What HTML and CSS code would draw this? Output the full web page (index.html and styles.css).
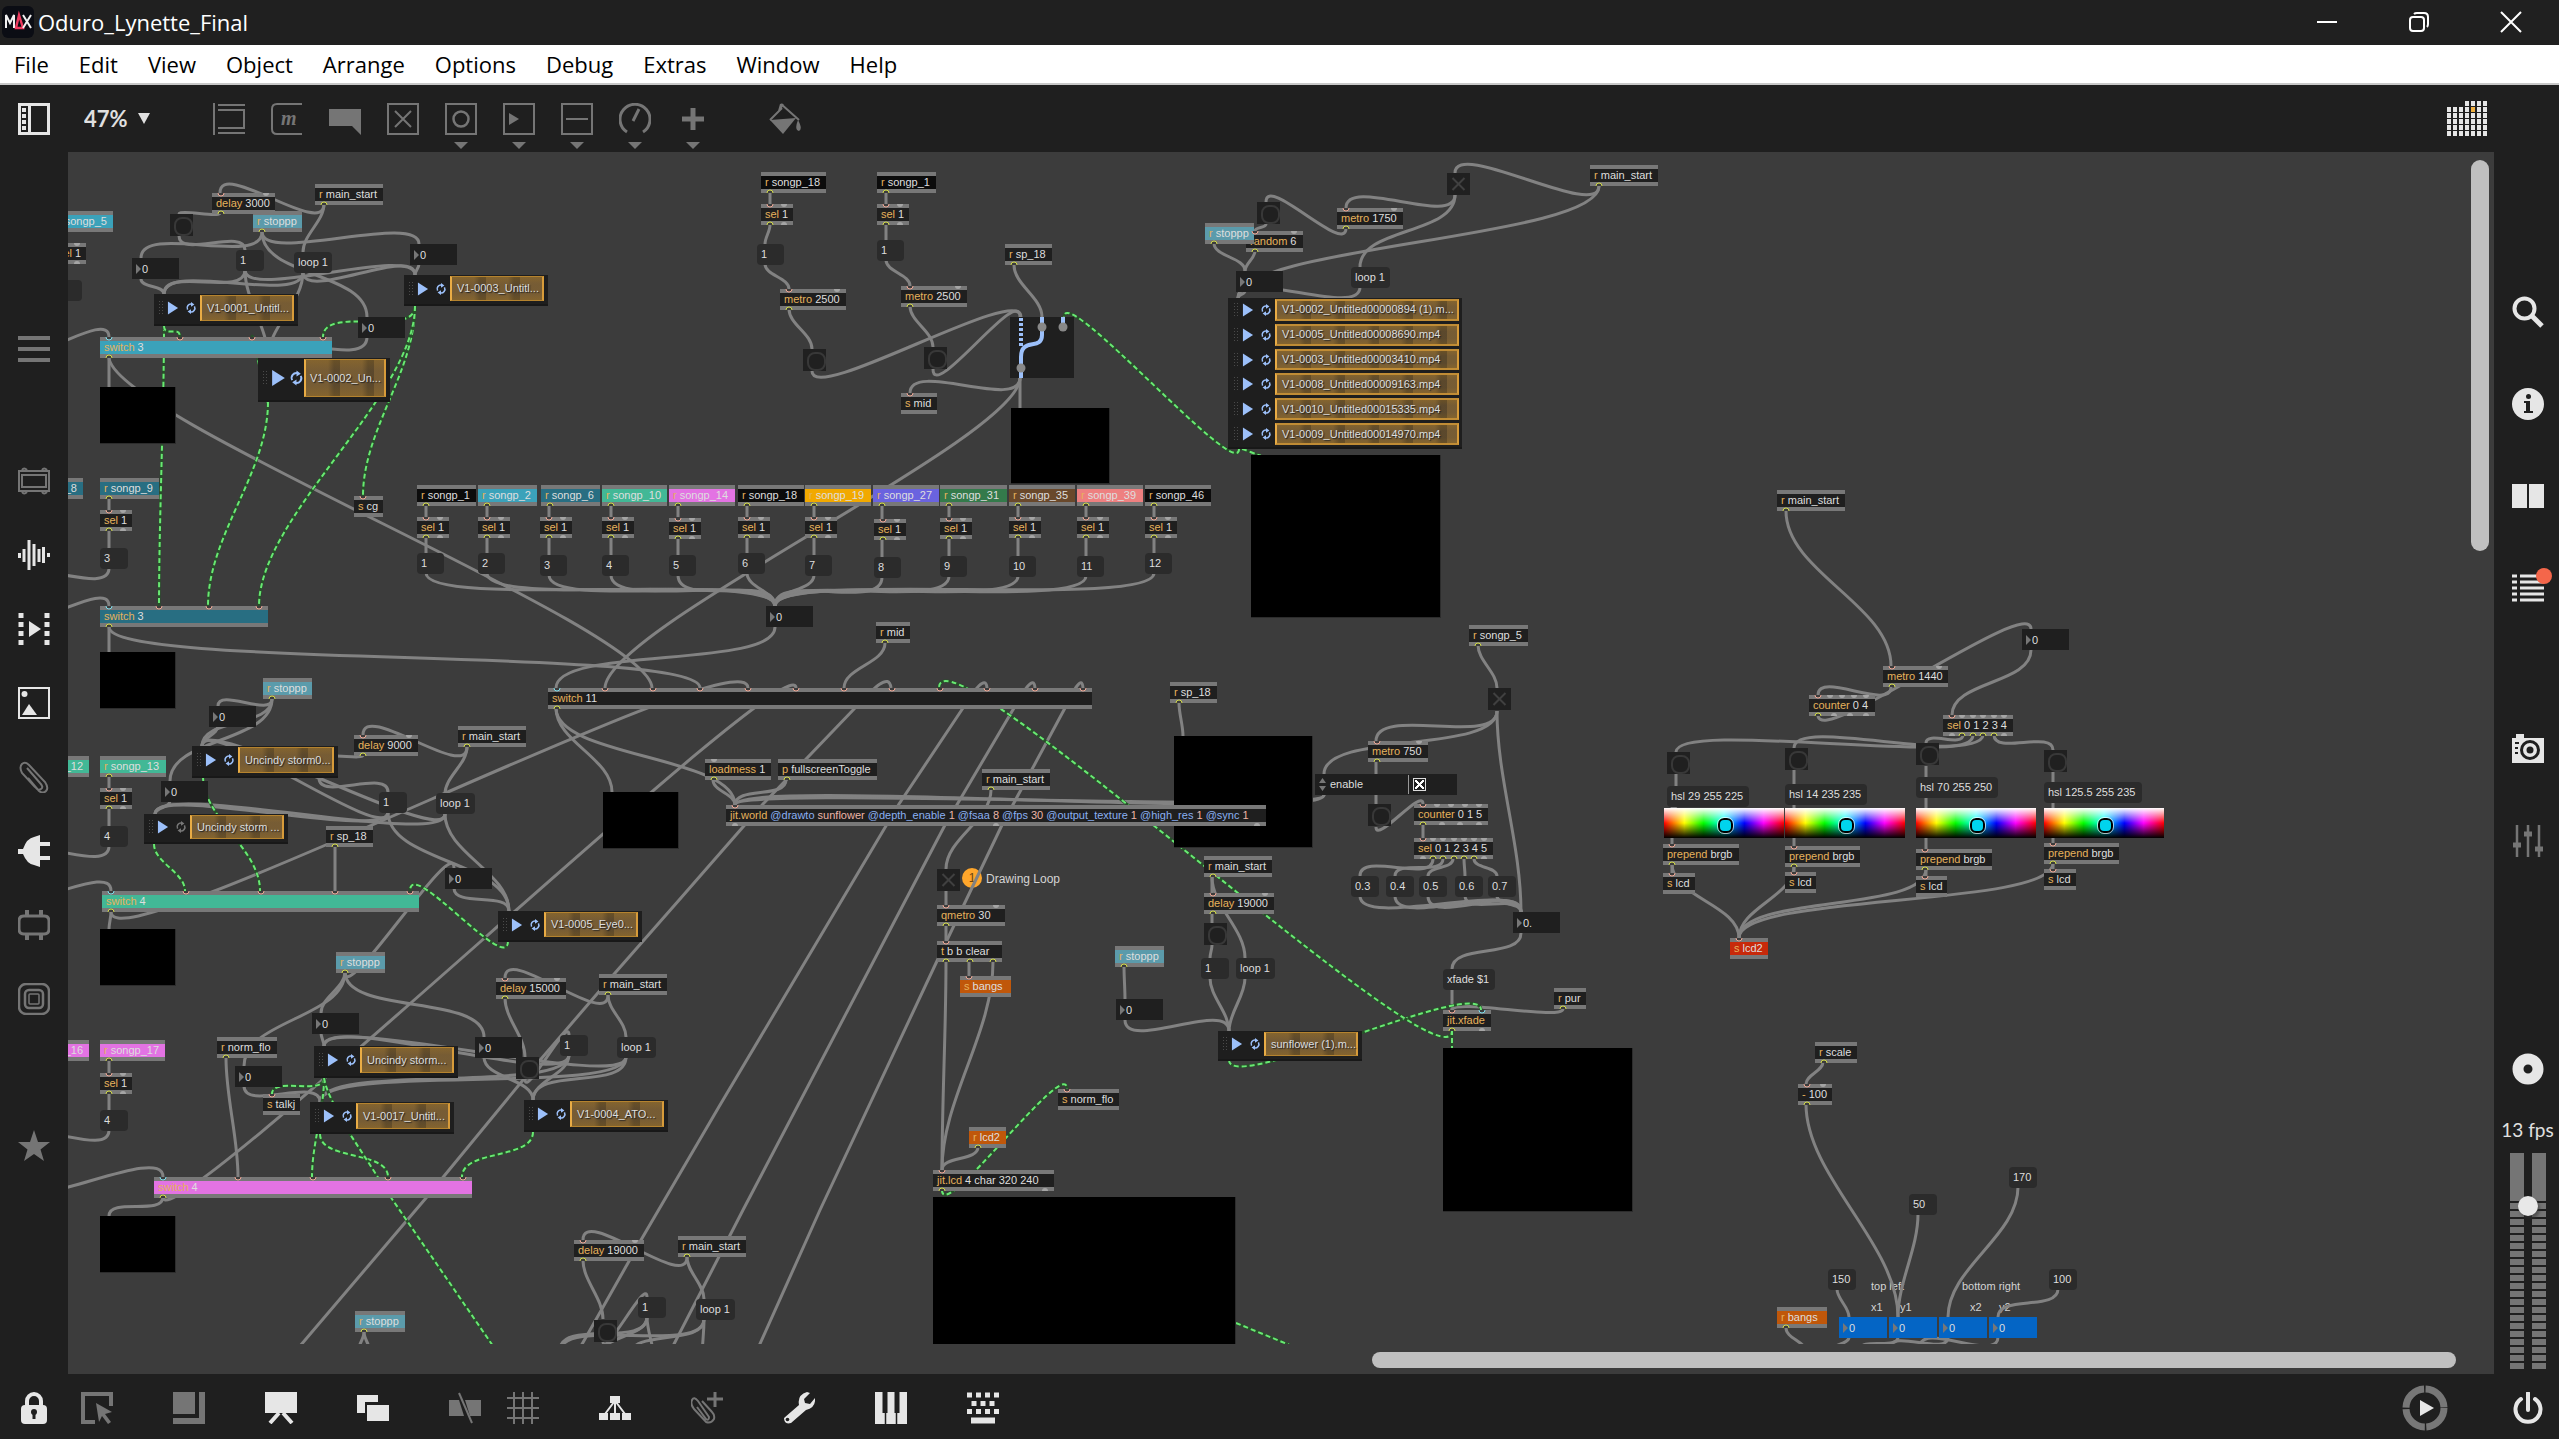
FILE: index.html
```html
<!DOCTYPE html>
<html lang="en">
<head>
<meta charset="utf-8">
<title>Oduro_Lynette_Final</title>
<link rel="stylesheet" href="styles.css">
</head>
<body>
<div class="app">
  <header class="titlebar">
    <svg class="logo" viewBox="0 0 32 32"><rect width="32" height="32" rx="6" fill="#0b0d14"/><path d="M4 22V9l4 8 4-8v13" fill="none" stroke="#f2f2f2" stroke-width="2"/><path d="M14 22l3-13 4 13zM13 22h8" fill="none" stroke="#ee3b5f" stroke-width="2.4"/><path d="M21 9l8 13M29 9l-8 13" stroke="#f2f2f2" stroke-width="2"/></svg>
    <h1>Oduro_Lynette_Final</h1>
    <div class="window-controls">
      <button aria-label="Minimize"><svg viewBox="0 0 22 22"><path d="M1 11h20"/></svg></button>
      <button aria-label="Restore"><svg viewBox="0 0 22 22"><rect x="2" y="6" width="14" height="14" rx="3"/><path d="M6 3q1-1 3-1h7q4 0 4 4v7q0 2-1 3"/></svg></button>
      <button aria-label="Close"><svg viewBox="0 0 22 22"><path d="M1 1l20 20M21 1L1 21"/></svg></button>
    </div>
  </header>
  <nav class="menubar">
    <button>File</button><button>Edit</button><button>View</button><button>Object</button><button>Arrange</button><button>Options</button><button>Debug</button><button>Extras</button><button>Window</button><button>Help</button>
  </nav>
  <div class="toolbar">
    <button class="icon on" aria-label="Patcher windows"><svg viewBox="0 0 32 32"><path fill="none" stroke="currentColor" stroke-width="3" d="M1.500 1.500h29v29h-29zM11.500 1v30"/><path fill="currentColor" d="M4 5h4v4H4zM4 11h4v4H4zM4 17h4v4H4zM4 23h4v4H4z"/></svg></button>
    <label class="zoom"><select aria-label="Zoom level"><option>47%</option></select><svg viewBox="0 0 12 11"><path d="M0 0h12L6 11z" fill="currentColor"/></svg></label>
    <div class="tools">
      <button class="icon" aria-label="Object"><svg viewBox="0 0 32 32"><path d="M1 0v32M5 2h27M5 7h27M5 25h27M5 30h27M31 7v18" stroke="currentColor" stroke-width="2" fill="none"/></svg></button>
      <button class="icon" aria-label="Message"><svg viewBox="0 0 32 32"><path d="M31 1H6Q1 1 1 6v20q0 5 5 5h25" stroke="currentColor" stroke-width="2" fill="none"/><text x="10" y="22" class="m-glyph">m</text></svg></button>
      <button class="icon" aria-label="Comment"><svg viewBox="0 0 32 32"><path d="M0 6h32v26l-9-9H0z" fill="currentColor"/></svg></button>
      <button class="icon" aria-label="Toggle"><svg viewBox="0 0 32 32"><path d="M1 1h30v30H1zM8 8l16 16M24 8L8 24" stroke="currentColor" stroke-width="2" fill="none"/></svg></button>
      <button class="icon more" aria-label="Button"><svg viewBox="0 0 32 32"><path d="M1 1h30v30H1z" stroke="currentColor" stroke-width="2" fill="none"/><circle cx="16" cy="16" r="7.500" stroke="currentColor" stroke-width="2.500" fill="none"/></svg></button>
      <button class="icon more" aria-label="Number"><svg viewBox="0 0 32 32"><path d="M1 1h30v30H1z" stroke="currentColor" stroke-width="2" fill="none"/><path d="M6 10l10 6-10 6z" fill="currentColor"/></svg></button>
      <button class="icon more" aria-label="Slider"><svg viewBox="0 0 32 32"><path d="M1 1h30v30H1zM5 16h22" stroke="currentColor" stroke-width="2" fill="none"/></svg></button>
      <button class="icon more" aria-label="Dial"><svg viewBox="0 0 32 32"><path d="M8 29a15 15 0 1 1 16 0M14 18l6-12" stroke="currentColor" stroke-width="3" fill="none"/></svg></button>
      <button class="icon more" aria-label="Add"><svg viewBox="0 0 32 32"><path d="M16 5v22M5 16h22" stroke="currentColor" stroke-width="5"/></svg></button>
    </div>
    <button class="icon bucket" aria-label="Format palette"><svg viewBox="0 0 32 32"><path d="M12 1l18 16M13 5L1 17M12 1l-2 7 4-7" stroke="currentColor" stroke-width="2" fill="none"/><path d="M1 17l26-2-13 16zM29 17q5 9 1 11-5-1-1-11z" fill="currentColor"/></svg></button>
    <button class="icon on grid-icon" aria-label="Calendar"><svg viewBox="0 0 42 38" id="dots"></svg></button>
  </div>
  <main class="work">
    <aside class="left">
      <button class="icon" aria-label="Menu"><svg viewBox="0 0 32 32"><path d="M0 5h32M0 16h32M0 27h32" stroke="currentColor" stroke-width="4"/></svg></button>
      <button class="icon gap-a" aria-label="Devices"><svg viewBox="0 0 32 32"><path d="M1 6h30v20H1zM4 10h24v12H4zM4 5q2-3 5 0M24 5q2-3 5 0M4 27q2 3 5 0M24 27q2 3 5 0" stroke="currentColor" stroke-width="2" fill="none"/></svg></button>
      <button class="icon on" aria-label="Audio"><svg viewBox="0 0 32 32"><path d="M1.500 14v5M6 10v13M11 1v30M16 5v22M21 10v13M25.500 8v16M30.500 14v4" stroke="currentColor" stroke-width="3"/></svg></button>
      <button class="icon on" aria-label="Video"><svg viewBox="0 0 32 32"><path d="M11 8l12 8-12 8z" fill="currentColor"/><path d="M3 0v32M29 0v32" stroke="currentColor" stroke-width="5" stroke-dasharray="5 4"/></svg></button>
      <button class="icon on" aria-label="Images"><svg viewBox="0 0 32 32"><path d="M1 1h30v30H1z" stroke="currentColor" stroke-width="2" fill="none"/><circle cx="6.500" cy="7" r="3" fill="currentColor"/><path d="M4 28l7-11 8 11z" fill="currentColor"/></svg></button>
      <button class="icon" aria-label="Clippings"><svg viewBox="0 0 32 32"><path d="M9 7l13 15q4 4 1 6t-6-2L4 12Q1 6 4 3t7 1l16 17q4 6 1 9t-7 0L10 17" stroke="currentColor" stroke-width="2" fill="none"/></svg></button>
      <button class="icon on" aria-label="Plug-ins"><svg viewBox="0 0 32 32"><path d="M0 14h5Q9 3 16 2l6-2v32l-6-2Q9 29 5 19H0z" fill="currentColor"/><path d="M22 9h10M22 23h10" stroke="currentColor" stroke-width="4"/></svg></button>
      <button class="icon" aria-label="Abstractions"><svg viewBox="0 0 32 32"><path d="M6 7h20q5 0 5 5v8q0 5-5 5H6q-5 0-5-5v-8q0-5 5-5z" stroke="currentColor" stroke-width="3" fill="none"/><path d="M9 1v6M23 1v6M9 25v6M23 25v6" stroke="currentColor" stroke-width="4"/></svg></button>
      <button class="icon" aria-label="Snapshots"><svg viewBox="0 0 32 32"><rect x="1" y="1" width="30" height="30" rx="7" stroke="currentColor" stroke-width="2.500" fill="none"/><rect x="7" y="7" width="18" height="18" rx="4" stroke="currentColor" stroke-width="2.500" fill="none"/><rect x="11" y="11" width="10" height="10" rx="1" stroke="currentColor" stroke-width="1.500" fill="none"/></svg></button>
      <button class="icon gap-b" aria-label="Favorites"><svg viewBox="0 0 32 32"><path d="M16 0l4 12h12l-9.500 7.500L26 31l-10-7-10 7 3.500-11.500L0 12h12z" fill="currentColor"/></svg></button>
    </aside>
    <section class="canvas">
      <div class="patch" id="patch"></div>
      <div class="vbar"></div>
      <div class="hbar"></div>
    </section>
    <aside class="right">
      <button class="icon on" aria-label="Search"><svg viewBox="0 0 32 32"><circle cx="12.500" cy="12.500" r="10" stroke="currentColor" stroke-width="4" fill="none"/><path d="M20 20l10 10" stroke="currentColor" stroke-width="5"/></svg></button>
      <button class="icon on" aria-label="Inspector"><svg viewBox="0 0 32 32"><circle cx="16" cy="16" r="16" fill="currentColor"/><path d="M12 13h6v10h3v2h-9v-2h2v-8h-2z" fill="#1f1f1f"/><circle cx="16.500" cy="8.500" r="2.500" fill="#1f1f1f"/></svg></button>
      <button class="icon on" aria-label="Reference"><svg viewBox="0 0 32 32"><path d="M0 4h15v24H0zM17 4h15v24H17z" fill="currentColor"/></svg></button>
      <button class="icon on alert" aria-label="Console"><svg viewBox="0 0 32 32"><path d="M8 4h24M8 10h24M8 16h24M8 22h24M8 28h24" stroke="currentColor" stroke-width="3"/><path d="M0 4h5M0 10h5M0 16h5M0 22h5M0 28h5" stroke="currentColor" stroke-width="3"/></svg></button>
      <button class="icon on gap-c" aria-label="Camera"><svg viewBox="0 0 32 32"><path d="M0 5h32v25H0z" fill="currentColor"/><path d="M4 1h8v4H4z" fill="currentColor"/><circle cx="18" cy="17" r="8.500" fill="none" stroke="#1f1f1f" stroke-width="3"/><circle cx="18" cy="17" r="3.500" fill="#1f1f1f"/><path d="M3 10h4M3 15h3M3 20h3" stroke="#1f1f1f" stroke-width="2"/></svg></button>
      <button class="icon" aria-label="Mixer"><svg viewBox="0 0 32 32"><path d="M5 0v32M16 0v32M27 0v32" stroke="currentColor" stroke-width="2.500"/><path d="M1 20h8M12 9h8M23 24h8" stroke="currentColor" stroke-width="5"/></svg></button>
      <button class="icon on gap-d" aria-label="Record"><svg viewBox="0 0 32 32"><circle cx="16" cy="16" r="10" fill="none" stroke="currentColor" stroke-width="11"/></svg></button>
      <p class="fps">13 fps</p>
      <div class="meter"><span></span><span></span><input type="range" aria-label="Output level" min="0" max="100" value="78"></div>
    </aside>
  </main>
  <footer class="bottombar">
    <button class="icon on lock" aria-label="Lock"><svg viewBox="0 0 32 32"><path d="M9 14V9a7 7 0 0 1 14 0v5" stroke="currentColor" stroke-width="4" fill="none"/><rect x="3" y="13" width="26" height="19" rx="4" fill="currentColor"/><path d="M16 19v8" stroke="#1f1f1f" stroke-width="3"/><circle cx="16" cy="20" r="3" fill="#1f1f1f"/></svg></button>
    <button class="icon" aria-label="Select"><svg viewBox="0 0 32 32"><path d="M30 14V2H2v28h12" stroke="currentColor" stroke-width="4" fill="none"/><path d="M15 11l16 9-7 2 6 8-3 2-6-8-3 6z" fill="currentColor"/></svg></button>
    <button class="icon" aria-label="Resize"><svg viewBox="0 0 32 32"><path d="M0 0h22v22H0z" fill="currentColor"/><path d="M29 0v29H0" stroke="currentColor" stroke-width="6" fill="none"/></svg></button>
    <button class="icon on" aria-label="Presentation"><svg viewBox="0 0 32 32"><path d="M0 0h32v21H0z" fill="currentColor"/><path d="M14 21L5 31M18 21l9 10" stroke="currentColor" stroke-width="4"/></svg></button>
    <button class="icon on" aria-label="New view"><svg viewBox="0 0 32 32"><path d="M0 3h21v7H8v11H0z" fill="currentColor"/><path d="M10 13h22v16H10z" fill="currentColor"/></svg></button>
    <button class="icon" aria-label="Mute"><svg viewBox="0 0 32 32"><path d="M0 8h10l5 16H0zM16 8h16v16H21z" fill="currentColor"/><path d="M10 1l13 30" stroke="currentColor" stroke-width="2"/></svg></button>
    <button class="icon near" aria-label="Grid"><svg viewBox="0 0 32 32"><path d="M7 0v32M16 0v32M25 0v32M0 6h32M0 16h32M0 26h32" stroke="currentColor" stroke-width="2"/></svg></button>
    <button class="icon on" aria-label="Hierarchy"><svg viewBox="0 0 32 32"><path d="M11 4h10v7H11zM0 21h9v7H0zM11 21h10v7H11zM23 21h9v7h-9z" fill="currentColor"/><path d="M16 10v12M15 10L6 22M17 10l9 12" stroke="currentColor" stroke-width="2"/></svg></button>
    <button class="icon" aria-label="Clipping"><svg viewBox="0 0 32 32"><path d="M6 15l9 12q3 2 3-2L7 9Q3 4 1 8t2 9l12 13q5 2 8-3 1-4-2-7L11 9" stroke="currentColor" stroke-width="2" fill="none"/><path d="M24 0v15M16 7h16" stroke="currentColor" stroke-width="3"/></svg></button>
    <button class="icon on" aria-label="Tools"><svg viewBox="0 0 32 32"><path d="M1 26L16 13Q14 3 24 0l3 1-6 6 1 4 5 1 5-6q1 10-9 12L8 31q-7 2-7-5z" fill="currentColor"/><circle cx="4.500" cy="27.500" r="1.800" fill="#1f1f1f"/></svg></button>
    <button class="icon on" aria-label="MIDI keyboard"><svg viewBox="0 0 32 32"><path d="M0 0h32v32H0z" fill="currentColor"/><path d="M10 0v21M22 0v21" stroke="#1f1f1f" stroke-width="5"/><path d="M10.500 20v12M21.500 20v12" stroke="#1f1f1f" stroke-width="1.500"/></svg></button>
    <button class="icon on" aria-label="Key commands"><svg viewBox="0 0 32 32"><path d="M0 3h32M0 19.500h32" stroke="currentColor" stroke-width="5" stroke-dasharray="5 4"/><path d="M4.500 11.500h24" stroke="currentColor" stroke-width="5" stroke-dasharray="5 4"/><path d="M4 28.500h24" stroke="currentColor" stroke-width="6"/></svg></button>
    <button class="wheel" aria-label="Start transport"><svg viewBox="0 0 46 46"><circle cx="23" cy="23" r="19" fill="none" stroke="#777" stroke-width="7" stroke-dasharray="28.300 1.550"/><path d="M18 15l14 8-14 8z" fill="#e6e6e6"/></svg></button>
    <button class="icon on power" aria-label="Audio on"><svg viewBox="0 0 32 32"><path d="M9 7a12.500 12.500 0 1 0 14 0M16 1v17" stroke="currentColor" stroke-width="4" fill="none" stroke-linecap="round"/></svg></button>
  </footer>
</div>
<script src="patch.js"></script>
</body>
</html>
```

FILE: styles.css
```css
* { box-sizing: border-box; }
body { margin: 0; background: #1f1f1f; color: #e0e0e0; font-family: "Liberation Sans", Arial, sans-serif; }
button, input, select { font: inherit; color: inherit; background: none; border: 0; padding: 0; margin: 0; }
.app { min-height: 100vh; display: grid; grid-template-rows: 45px 40px 67px 1fr 65px; }

.titlebar { display: flex; align-items: center; gap: 4px; padding: 0 37px 2px 2px; background: #202020; }
.titlebar .logo { width: 32px; height: 32px; }
.titlebar h1 { flex: 1; margin: 0; font: 400 22px/28px "Open Sans", "Noto Sans", sans-serif; color: #fff; }
.window-controls { display: flex; gap: 70px; }
.window-controls svg { display: block; width: 22px; height: 22px; fill: none; stroke: #fff; stroke-width: 2; }

.menubar { display: flex; align-items: center; gap: 30px; padding: 0 14px; background: #fff; border-bottom: 2px solid #c8c8c8; color: #000; font: 400 22px/28px "Open Sans", "Noto Sans", sans-serif; }

.icon { width: 32px; height: 32px; color: #757575; position: relative; flex: none; }
.icon svg { display: block; width: 100%; height: 100%; }
.icon.on { color: #e6e6e6; }
.toolbar { display: flex; align-items: center; padding: 0 70px 0 18px; }
.zoom { display: flex; align-items: center; gap: 10px; margin-left: 34px; color: #e0e0e0; }
.zoom select { appearance: none; width: 44px; font: 700 22px/28px Lato, sans-serif; }
.zoom svg { width: 12px; height: 11px; }
.tools { display: flex; gap: 26px; margin-left: 63px; }
.m-glyph { font: italic 700 20px "Liberation Serif", serif; fill: currentColor; }
.more::after { content: ""; position: absolute; left: 9px; top: 39px; border: 7px solid transparent; border-top-color: #757575; border-bottom: 0; }
.bucket { margin-left: 60px; }
.grid-icon { width: 42px; height: 38px; margin-left: auto; }

.work { display: grid; grid-template-columns: 68px 1fr 65px; }
.left, .right { display: flex; flex-direction: column; align-items: center; gap: 42px; padding-top: 181px; }
.left .gap-a { margin-top: 58px; }
.left .gap-b { margin-top: 73px; }
.right { gap: 60px; padding-top: 144px; padding-left: 2px; }
.right .gap-c { margin-top: 69px; }
.right .gap-d { margin-top: 136px; }
.alert::after { content: ""; position: absolute; right: -8px; top: -4px; width: 16px; height: 16px; border-radius: 8px; background: #f4664a; }
.fps { margin: -28px 0 0; height: 26px; font: 400 19px/26px Lato, sans-serif; white-space: nowrap; }
.meter { position: relative; display: flex; gap: 8px; margin-top: -50px; height: 216px; }
.meter span { width: 14px; background: linear-gradient(#757575 0 48px, transparent 48px) , repeating-linear-gradient(#1f1f1f 0 2px, #757575 2px 8px); }
.meter input { position: absolute; left: 3px; top: 0; width: 30px; height: 216px; appearance: none; writing-mode: vertical-lr; direction: rtl; }
.meter input::-webkit-slider-thumb { appearance: none; width: 20px; height: 20px; border-radius: 10px; background: #e8e8e8; box-shadow: 2px 3px 3px #3338; }

.bottombar { display: flex; align-items: center; gap: 60px; padding: 2px 15px 0 18px; }
.bottombar .lock { margin-right: -29px; }
.bottombar .near { margin-left: -34px; }
.wheel { width: 46px; height: 46px; margin-left: auto; margin-right: 4px; }
.wheel svg { display: block; }

.canvas { position: relative; background: #3c3c3c; overflow: hidden; }
.patch { position: absolute; left: 0; right: 0; top: 0; bottom: 30px; overflow: hidden; }
.patch > svg { position: absolute; left: 0; top: 0; width: 100%; height: 100%; overflow: visible; }
.vbar { position: absolute; right: 5px; top: 8px; width: 18px; height: 391px; border-radius: 9px; background: #c0c0c0; }
.hbar { position: absolute; right: 38px; bottom: 6px; width: 1084px; height: 16px; border-radius: 8px; background: #c0c0c0; }

.cables { fill: none; pointer-events: none; }
.cable { stroke: #828282; stroke-width: 3; }
.matrix-base { stroke: #28502a; stroke-width: 3; }
.matrix { stroke: #69e873; stroke-width: 2; stroke-dasharray: 5 3; }
.port { fill: #3c3c3c; stroke-width: 1; }
.port.p { stroke: #f0a896; }
.port.c { stroke: #7fe0ee; }
.port.y { stroke: #d3dc48; }
.port.g { fill: #a5a5a5; stroke: none; }

.node { position: absolute; font-size: 11px; line-height: 13px; white-space: nowrap; color: #dedede; }
.obj { height: 21px; padding-left: 4px; background: #1f1f1f; border-top: 4px solid #787878; border-bottom: 4px solid #787878; }
.obj b, .obj .attr { font-weight: 400; color: #e6b25c; }
.obj .attr { color: #8ab0f2; }
.obj .arg { color: #edb5a8; }
.c-black { background: #0c0c0c; } .c-sky { background: #3ba2ba; } .c-stop { background: #5b9bab; } .c-teal { background: #286e82; }
.c-green { background: #42b896; } .c-pink { background: #e373e3; } .c-gold { background: #f2a900; } .c-indigo { background: #6a63df; }
.c-forest { background: #347a4b; } .c-brown { background: #69482b; } .c-coral { background: #ee8080; } .c-orange { background: #c0570a; } .c-red { background: #c8290a; }
.msg { height: 21px; padding-left: 4px; text-align: left; background: #2b2b2b; border-radius: 4px; }
.num { height: 21px; width: 47px; display: flex; align-items: center; gap: 1px; padding-left: 4px; background: #1f1f1f; }
.num::before { content: ""; border: 5px solid transparent; border-left: 5px solid #777; border-right: 0; }
.num input { width: 30px; height: 15px; }
.num.blue { background: #0465c5; width: 48px; }
.bang, .tog { width: 23px; height: 22px; background: #202020; appearance: none; }
.bang::before { content: ""; position: absolute; left: 4px; top: 3px; width: 15px; height: 15px; border: 2px solid #383838; border-radius: 8px; }
.tog::before, .tog::after { content: ""; position: absolute; left: 3px; top: 10px; width: 17px; height: 2px; background: #404040; rotate: 45deg; }
.tog::after { rotate: -45deg; }
.black { background: #000; border-right: 1px solid #2c2c2c; border-bottom: 1px solid #2c2c2c; }
.note { line-height: 14px; font-size: 12px; color: #d4d4d4; }
.note.sm { font-size: 11px; }
.step { width: 20px; height: 20px; border-radius: 10px; background: #ffa62b; color: #6b4510; text-align: center; line-height: 20px; }

.player { background: #1e1e1e; border-bottom: 2px solid #181818; display: flex; flex-direction: column; }
.clip { flex: 1; display: grid; grid-template-columns: 9px 18px 15px 1fr; align-items: center; padding: 1px 4px 3px 4px; }
.clip svg { display: block; width: 12px; height: 14px; }
.clip .grip { width: 6px; height: 16px; background: radial-gradient(#4a4a4a 1px, transparent 1px) 0 0 / 3px 3px; }
.clip .thumb { height: 100%; display: flex; align-items: center; padding-left: 5px; border: 1px solid #b5832e; border-left: 2px solid #e9ac45; border-right: 2px solid #d79b3a; background: repeating-linear-gradient(90deg, #8d6c3a88 0 22px, #5a472b88 28px 34px), linear-gradient(#7a5b22, #5d4a2e 30% 70%, #7a5b22); text-shadow: 1px 1px 1px #222; }
.big .clip svg { width: 15px; height: 20px; }
.big .thumb { padding-left: 4px; }
.list .clip { padding: 1px 3px 2px 5px; }
.list .thumb { border-top: 2px solid #c08c35; border-bottom: 2px solid #c08c35; }

.attrui { height: 21px; display: flex; align-items: center; gap: 4px; padding-left: 4px; background: #1f1f1f; }
.attrui svg { width: 7px; height: 13px; }
.attrui span { width: 79px; border-right: 1px solid #999; line-height: 19px; }
.attrui input { appearance: none; width: 13px; height: 13px; border: 1px solid #ddd; background: linear-gradient(45deg, transparent 42%, #fff 42% 58%, transparent 58%) 1px 1px / 9px 9px no-repeat, linear-gradient(-45deg, transparent 42%, #fff 42% 58%, transparent 58%) 1px 1px / 9px 9px no-repeat; }
.swatch { width: 120px; height: 30px; background: linear-gradient(#fff, #fff0 50%, #0000 50%, #000), linear-gradient(90deg, #f00, #ff0 17%, #0f0 33%, #0ff 50%, #00f 67%, #f0f 83%, #f00); }
.swatch::after { content: ""; position: absolute; left: 54px; top: 10px; width: 11px; height: 11px; border: 2px solid #000; border-radius: 6px; background: #00d4ee; outline: 1px solid #fffa; }
.router { background: #1f1f1f; }
.router svg { display: block; }
```

FILE: patch.js
```js
// Patch data: every coordinate is in window space; the canvas begins at OX, OY.
const OX = 68, OY = 152;
const patch = document.getElementById('patch');

// Objects: x, y, width, text, inlets, outlets, colour
const objects = `
54 211 59|r songp_5|||sky
54 243 32|sel 1|pg|yg
212 193 63|delay 3000|pg|y
253 211 49|r stoppp||y|stop
315 184 68|r main_start||y
100 337 232|switch 3|cppp|y|sky
354 496 29|s cg|p|
24 478 59|r songp_8|||teal
100 478 59|r songp_9||y|teal
100 510 32|sel 1|pg|yg
100 606 168|switch 3|cppp|y|teal
417 485 59|r songp_1||y|black
478 485 59|r songp_2||y|sky
541 485 59|r songp_6||y|teal
602 485 65|r songp_10||y|green
669 485 66|r songp_14||y|pink
738 485 66|r songp_18||y|black
805 485 66|r songp_19||y|gold
873 485 66|r songp_27||y|indigo
940 485 67|r songp_31||y|forest
1009 485 66|r songp_35||y|brown
1077 485 66|r songp_39||y|coral
1145 485 66|r songp_46||y|black
417 517 32|sel 1|pg|yg
478 517 32|sel 1|pg|yg
540 517 32|sel 1|pg|yg
602 517 32|sel 1|pg|yg
669 518 32|sel 1|pg|yg
738 517 32|sel 1|pg|yg
805 517 32|sel 1|pg|yg
874 519 32|sel 1|pg|yg
940 518 32|sel 1|pg|yg
1009 517 32|sel 1|pg|yg
1077 517 32|sel 1|pg|yg
1145 517 32|sel 1|pg|yg
876 622 34|r mid||y
548 688 544|switch 11|cppppppppppp|y
1170 682 47|r sp_18||y
263 678 49|r stoppp||y|stop
354 735 64|delay 9000|pg|y
458 726 68|r main_start||y
24 756 65|r songp_12|||green
100 756 66|r songp_13||y|green
100 788 32|sel 1|pg|yg
326 826 47|r sp_18||y
102 891 317|switch 4|cpppp|y|green
336 952 49|r stoppp||y|stop
496 978 70|delay 15000|pg|y
599 974 68|r main_start||y
217 1037 60|r norm_flo||y
263 1094 37|s talkj|p|
24 1040 65|r songp_16|||pink
100 1040 65|r songp_17||y|pink
100 1073 32|sel 1|pg|yg
154 1177 318|switch 4|cpppp|y|pink
574 1240 70|delay 19000|pg|y
678 1236 68|r main_start||y
355 1311 50|r stoppp||y|stop
761 172 65|r songp_18||y|black
761 204 32|sel 1|pg|yg
780 289 66|metro 2500|pg|y
877 172 59|r songp_1||y|black
877 204 32|sel 1|pg|yg
901 286 66|metro 2500|pg|y
1005 244 47|r sp_18||y
901 393 36|s mid|p|
1337 208 66|metro 1750|pg|y
1246 231 57|random 6|pg|y
1205 223 49|r stoppp||y|stop
1590 165 68|r main_start||y
1469 625 59|r songp_5||y
705 759 66|loadmess 1|g|y
778 759 99|p fullscreenToggle||y
982 769 68|r main_start||y
937 905 68|qmetro 30|pg|y
937 941 65|t b b clear|p|yyy
960 976 51|s bangs|p||orange
969 1127 37|r lcd2||y|orange
1058 1089 61|s norm_flo|p|
933 1170 121|jit.lcd 4 char 320 240|p|yg
1115 946 49|r stoppp||y|stop
1204 856 68|r main_start||y
1204 893 70|delay 19000|pg|y
1368 741 60|metro 750|pg|y
1414 804 74|counter 0 1 5|pgggg|yggg
1414 838 79|sel 0 1 2 3 4 5|pgggggg|gyyyyyg
1554 988 32|r pur||y
1443 1010 48|jit.xfade|pc|yg
1777 490 68|r main_start||y
1883 666 65|metro 1440|pg|y
1809 695 66|counter 0 4|pgggg|yggg
1943 715 70|sel 0 1 2 3 4|pggggg|gyyyyg
1663 844 76|prepend brgb|p|y
1785 846 75|prepend brgb|p|y
1916 849 76|prepend brgb|p|y
2044 843 75|prepend brgb|p|y
1663 873 32|s lcd|p|
1785 872 31|s lcd|p|
1916 876 31|s lcd|p|
2044 869 32|s lcd|p|
1730 938 38|s lcd2|p||red
1815 1042 42|r scale||y
1798 1084 34|- 100|pg|y
1777 1307 50|r bangs||y|orange`;

// Message boxes: x, y, width, text
const messages = `
54 280 28|
236 250 28|1
294 252 38|loop 1
100 548 28|3
417 553 27|1
478 553 27|2
540 555 27|3
602 555 27|4
669 555 27|5
738 553 27|6
805 555 27|7
874 557 27|8
940 556 27|9
1009 556 27|10
1077 556 27|11
1145 553 27|12
100 826 28|4
379 792 28|1
436 793 39|loop 1
560 1035 28|1
617 1037 39|loop 1
100 1110 28|4
638 1297 28|1
696 1299 39|loop 1
757 244 27|1
877 240 27|1
1351 267 39|loop 1
1201 958 28|1
1236 958 39|loop 1
1351 876 28|0.3
1386 876 28|0.4
1419 876 28|0.5
1455 876 28|0.6
1488 876 28|0.7
1443 969 52|xfade $1
1667 786 82|hsl 29 255 225
1785 784 82|hsl 14 235 235
1916 777 82|hsl 70 255 250
2044 782 98|hsl 125.5 255 235
2009 1167 28|170
1909 1194 28|50
1828 1269 28|150
2049 1269 28|100`;

const numbers = `132 258|410 244|358 317|766 606|209 706|161 781|445 868|312 1013|235 1066|475 1037|1236 271|1116 999|1513 912 0.|2022 629
|1839 1317 0 blue|1889 1317 0 blue|1939 1317 0 blue|1989 1317 0 blue`;
const bangs = '170 214|516 1057|594 1320|803 349|924 347|1257 202|1204 923|1368 804|1667 752|1785 748|1916 743|2044 750';
const toggles = '1447 173|937 869|1488 688';
const screens = `100 387 76 57|100 652 76 57|603 792 76 57|100 929 76 57|100 1216 76 57|1011 408 99 76|1251 455 190 163
|1174 736 139 112|933 1197 303 152|1443 1048 190 164`;
const players = `404 275 144 31|V1-0003_Untitl...
154 294 144 32|V1-0001_Untitl...
258 358 132 44|V1-0002_Un...|big
192 746 146 32|Uncindy storm0...
144 814 144 30|Uncindy storm ...||off
498 911 144 31|V1-0005_Eye0...
314 1046 144 32|Uncindy storm...
310 1102 144 32|V1-0017_Untitl...
524 1100 144 32|V1-0004_ATO...
1218 1031 144 30|sunflower (1).m...
1228 298 234 151|V1-0002_Untitled00000894 (1).m...;V1-0005_Untitled00008690.mp4;V1-0003_Untitled00003410.mp4;V1-0008_Untitled00009163.mp4;V1-0010_Untitled00015335.mp4;V1-0009_Untitled00014970.mp4|list`;
const notes = `986 872 Drawing Loop|1871 1279 top left sm|1962 1279 bottom right sm|1871 1300 x1 sm|1900 1300 y1 sm|1970 1300 x2 sm|1999 1300 y2 sm`;

// Control cables: x1 y1 x2 y2 [bend]
const cables = `
324 204 220 193,220 213 179 214 5,179 236 245 250,262 232 141 258,262 232 419 244,262 232 367 317,324 204 303 252
245 270 164 294,245 270 415 275,245 270 268 358,303 272 164 294,303 272 415 275,303 272 268 358
141 279 164 294,419 264 415 275,367 337 268 358,20 345 109 337,109 357 109 387,109 357 652 688 60
109 499 109 510,109 531 109 548,109 568 20 582,20 611 109 606,109 627 109 652,109 627 700 688
426 505 426 517,487 505 487 517,549 505 549 517,611 505 611 517,678 505 678 517,747 505 747 517,814 505 814 517,882 505 882 519,949 505 949 517,1018 505 1018 517,1086 505 1086 517,1154 505 1154 517
426 538 426 553,487 538 487 553,549 538 549 555,611 538 611 555,678 538 678 555,747 538 747 553,814 538 814 555,882 540 882 557,949 538 949 556,1018 538 1018 556,1086 538 1086 556,1154 538 1154 553
426 573 775 606,487 573 775 606,549 575 775 606,611 575 775 606,678 575 775 606,747 573 775 606,814 575 775 606,882 577 775 606,949 576 775 606,1018 576 775 606,1086 576 775 606,1154 573 775 606
775 627 556 688,885 643 844 688,111 912 748 688 55,163 1197 796 688 50,556 708 612 792,556 708 735 805
272 699 218 706,272 699 202 746,272 699 170 781,218 726 202 746,170 801 155 814,388 812 155 814,388 812 509 911,388 812 202 746
445 814 202 746,445 814 155 814,445 814 509 911,467 747 363 735,467 747 445 794,319 778 388 792,363 755 330 758 5
109 777 109 788,109 808 109 826,109 846 20 859,20 888 111 891,335 846 335 891,111 912 109 929
345 972 454 868,345 972 321 1013,345 972 484 1037,345 972 244 1066,454 888 509 911
608 995 505 978,608 995 626 1037,505 998 525 1057,525 1079 569 1035,321 1033 324 1046,244 1086 320 1102,484 1057 533 1100
569 1055 324 1046,569 1055 320 1102,569 1055 533 1100,626 1057 324 1046,626 1057 320 1102,626 1057 533 1100
226 1058 238 1177,109 1061 109 1073,109 1094 109 1110,109 1130 20 1142,20 1184 163 1177,163 1197 109 1216
687 1257 583 1240,687 1257 704 1299,583 1260 603 1319,603 1341 647 1297,647 1317 560 1350,647 1317 600 1356,647 1317 654 1360,704 1319 560 1352,704 1319 630 1356,704 1319 702 1360
364 1332 358 1352,364 1332 370 1352
770 193 770 204,770 225 765 244,765 264 789 289,789 309 812 349,812 371 1021 317,886 193 886 204,886 225 886 240,886 260 910 286,910 306 933 347,933 369 1020 317
1014 265 1042 317,1020 378 910 393,1020 378 1020 408,1020 378 605 688 60
1599 186 1455 173,1599 186 1238 298,1455 195 1346 208,1455 195 1360 267,1346 228 1266 202,1266 224 1255 231,1255 251 1245 271,1214 243 1245 271,1245 291 1238 298,1360 287 1238 298
713 780 735 805,786 780 735 805,1324 795 735 805 20,1324 795 735 805 28,991 790 946 869,946 891 946 905,946 926 946 941,946 962 942 1170,969 962 969 976,993 962 942 1170,978 1147 942 1170
1124 966 1125 1000,1125 1020 1229 1031,1212 877 1212 893,1212 877 1245 958,1212 913 1212 923,1212 945 1210 958,1210 978 1229 1031,1245 978 1229 1031,1179 703 1183 736
1478 645 1497 688,1497 711 1376 741,1497 711 1324 774,1497 711 1521 912,1376 761 1376 804,1376 827 1423 804,1423 825 1423 838
1433 859 1360 876,1443 859 1395 876,1453 859 1428 876,1464 859 1465 876,1474 859 1497 876
1360 896 1521 912,1395 896 1521 912,1428 896 1521 912,1465 896 1521 912,1497 896 1521 912,1521 933 1452 969,1452 989 1452 1010,1563 1009 1452 1010 12
1786 511 1891 666,1891 687 1818 695,1818 715 2031 629,2031 650 1952 715,1963 735 1926 743,1973 735 1794 748,1983 735 1676 752,1994 735 2053 750
1676 774 1676 786,1794 770 1794 784,1926 766 1926 777,2053 772 2053 782,1676 806 1672 808,1794 804 1794 808,1926 798 1926 808,2053 802 2053 808
1672 838 1672 844,1794 838 1794 846,1926 838 1926 849,2053 838 2053 843,1672 864 1672 873,1794 866 1794 872,1926 869 1926 876,2053 863 2053 869
1672 864 1739 938,1794 866 1739 938,1926 869 1739 938,2053 863 1739 938
1823 1062 1806 1084,1806 1104 1898 1317,2018 1187 1948 1317,1918 1214 1898 1317,1837 1289 1849 1317,2058 1289 1998 1317,1786 1328 1806 1352
1849 1337 1830 1352,1898 1337 1860 1350,1948 1337 1890 1348,1998 1337 1920 1347`;
// Cables whose far end leaves the view
const longCables = [
  'M300 1346L426 1198L523 1080L615 973L680 899L763 804L855 708C874 688 889 672 891 688',
  'M581 1346L641 1240L720 1105L899 804L963 708C974 690 986 674 987 688',
  'M673 1346L743 1210L945 825L1014 708C1024 690 1034 674 1035 688',
  'M759 1346L820 1210L937 961L1002 825L1065 708C1074 690 1082 674 1083 688'
];
// Matrix cables
const matrices = `
164 326 159 606,164 326 180 337 12,268 402 252 337 12,415 306 323 337,415 306 363 496,415 306 259 606,268 402 208 606
154 844 185 891,203 776 260 891,508 941 410 891,324 1078 272 1094,324 1078 312 1177,320 1134 388 1177,533 1132 462 1177
1239 449 1064 317,1262 455 1239 449 3,1229 1060 1481 1010,1452 1030 939 688 70,1452 1030 1452 1048,942 1190 1067 1089`;
const longMatrices = ['M324 1078C328 1100 345 1120 350 1134L392 1199L493 1346', 'M1236 1323L1292 1346'];

function add(tag, cls, x, y, w, h) {
  const el = document.createElement(tag);
  el.className = 'node ' + cls;
  el.style.left = x - OX + 'px';
  el.style.top = y - OY + 'px';
  if (w) el.style.width = w + 'px';
  if (h) el.style.height = h + 'px';
  patch.append(el);
  return el;
}
const rows = (text, sep) => text.trim().split(sep).map(r => r.trim()).filter(Boolean);
const layer = inner => patch.insertAdjacentHTML('beforeend', `<svg class="cables"><g transform="translate(${-OX} ${-OY})">${inner}</g></svg>`);
const dots = '<span class="grip"></span>';
const play = '<svg viewBox="0 0 13 14"><path d="M1 0l11 7-11 7z" fill="#9cc0fa"/></svg>';
const loop = c => `<svg viewBox="0 0 14 14"><path d="M3 9A4.500 4.500 0 0 1 8 2.500M11 5A4.500 4.500 0 0 1 6 11.500" fill="none" stroke="${c}" stroke-width="1.800"/><path d="M7 0l4 3-4 2.500zM7 14l-4-3 4-2.500z" fill="${c}"/></svg>`;

// Comments lie under the cables
rows(notes, '|').forEach(n => {
  const small = n.endsWith(' sm');
  const [, x, y, t] = n.replace(/ sm$/, '').match(/^(\d+) (\d+) (.*)$/);
  add('span', small ? 'note sm' : 'note', x, y).textContent = t;
});
add('span', 'note step', 962, 868).textContent = '1';

function bend(row) {
  const [x1, y1, x2, y2, k] = row.split(' ').map(Number);
  const down = y2 - y1, dist = Math.hypot(x2 - x1, down);
  const c = k || Math.min(dist / 3, down > 0 ? 30 + down / 5 : 35);
  return `M${x1} ${y1}C${x1} ${y1 + c} ${x2} ${y2 - c} ${x2} ${y2}`;
}
const grey = rows(cables, /[,\n]/).map(bend).concat(longCables);
const green = rows(matrices, /[,\n]/).map(bend).concat(longMatrices);
layer(grey.map(d => `<path class="cable" d="${d}"/>`).join('') +
  green.map(d => `<path class="matrix-base" d="${d}"/><path class="matrix" d="${d}"/>`).join(''));

rows(screens, '|').forEach(s => add('div', 'black', ...s.split(' ').map(Number)));

rows(players, '\n').forEach(p => {
  const [box, names, cls = '', off] = p.split('|');
  const el = add('div', 'player ' + cls, ...box.split(' ').map(Number));
  el.innerHTML = names.split(';').map(n =>
    `<div class="clip">${dots}${play}${loop(off ? '#777' : '#9cc0fa')}<span class="thumb">${n}</span></div>`).join('');
});

let ports = '';
function port(kind, x, y, up) {
  ports += `<path class="port ${kind}" d="M${x - 3} ${y}a3 3 0 0 ${up ? 1 : 0} 6 0"/>`;
}
rows(objects, '\n').forEach(o => {
  const [box, text, ins = '', outs = '', color = ''] = o.split('|');
  const [x, y, w] = box.split(' ').map(Number);
  const el = add('div', 'obj' + (color && ' c-' + color), x, y, w);
  const [head, ...rest] = text.split(' ');
  el.innerHTML = `<b>${head}</b> ` + rest.join(' ');
  const place = (list, py, up) => [...list].forEach((k, i) => {
    const step = list.length > 1 ? (w - 18) / (list.length - 1) : 0;
    port(k, Math.round(x + 9 + i * step), py, up);
  });
  place(ins, y, false);
  place(outs, y + 21, true);
});

const world = add('div', 'obj', 726, 805, 540);
world.innerHTML = '<b>jit.world</b> ' + '@drawto sunflower @depth_enable 1 @fsaa 8 @fps 30 @output_texture 1 @high_res 1 @sync 1'
  .split(' ').map(a => `<span class="${a[0] === '@' ? 'attr' : 'arg'}">${a}</span>`).join(' ');
port('p', 735, 805, false);
[735, 996, 1257].forEach(x => port('g', x, 826, true));

rows(messages, '\n').forEach(m => {
  const [box, text] = m.split('|');
  const el = add('button', 'msg', ...box.split(' ').map(Number));
  el.textContent = text;
  if (!text) el.setAttribute('aria-label', 'message');
});
rows(numbers, '|').forEach(n => {
  const [x, y, v = '0', cls = ''] = n.split(' ');
  add('label', 'num ' + cls, x, y).innerHTML = `<input type="text" aria-label="number box" value="${v}">`;
});
rows(bangs, '|').forEach(b => add('button', 'bang', ...b.split(' ').map(Number)).setAttribute('aria-label', 'bang'));
rows(toggles, '|').forEach(t => {
  const el = add('input', 'tog', ...t.split(' ').map(Number));
  el.type = 'checkbox';
  el.setAttribute('aria-label', 'toggle');
});
[[1664, 808], [1785, 808], [1916, 808], [2044, 808]].forEach(([x, y]) => add('div', 'swatch', x, y));

add('label', 'attrui', 1315, 774, 142).innerHTML =
  '<svg viewBox="0 0 7 13"><path d="M0 5l3.500-5L7 5zM0 8l3.500 5L7 8z" fill="#777"/></svg><span>enable</span><input type="checkbox" checked>';

add('div', 'router', 1010, 317, 64, 61).innerHTML =
  '<svg width="64" height="61" viewBox="0 0 64 61"><path d="M11 1v30" stroke="#9cc0fa" stroke-width="4" stroke-dasharray="3 2"/><path d="M32 0v18C32 34 11 20 11 40v21M53 0v10" fill="none" stroke="#9cc0fa" stroke-width="4"/><g fill="#888"><circle cx="32" cy="10" r="4.500"/><circle cx="53" cy="10" r="4.500"/><circle cx="11" cy="51" r="4.500"/></g></svg>';

layer(ports);

// Dot matrix in the top right corner
document.getElementById('dots').innerHTML = Array.from({ length: 42 }, (_, i) => {
  const col = i % 7, row = Math.floor(i / 7);
  if (row === 0 && col < 3) return '';
  return `<rect x="${col * 6}" y="${row * 6 + 1}" width="4" height="5" fill="${row === 1 && col === 4 ? '#f0b040' : 'currentColor'}"/>`;
}).join('');
```
